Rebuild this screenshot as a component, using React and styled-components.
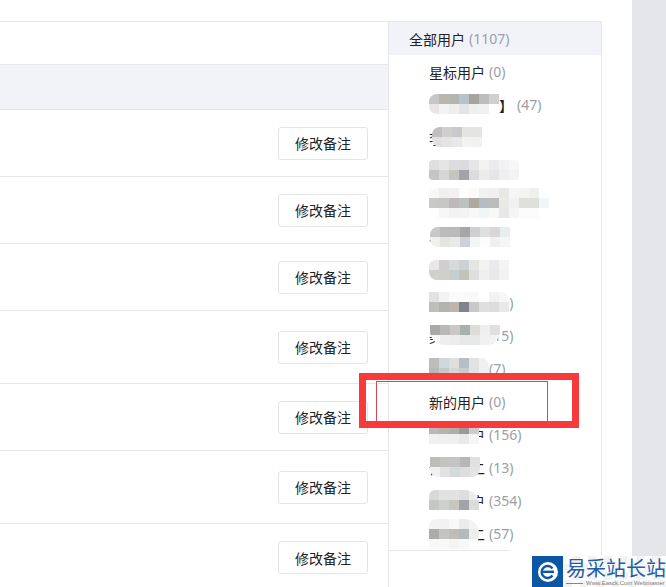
import React from "react";
import styled, { createGlobalStyle } from "styled-components";

const GlobalStyle = createGlobalStyle`
    html, body {
        margin: 0;
        padding: 0;
        background: #fff;
    }
    body {
        font-family: "Noto Sans CJK SC", "Liberation Sans", sans-serif;
        font-size: 14px;
        color: #222;
    }
`;

const Page = styled.div`
    display: flex;
    width: 666px;
    height: 587px;
    overflow: hidden;
    position: relative;
`;
const Content = styled.div`
    width: 632px;
    padding-top: 21px;
    box-sizing: border-box;
    flex-shrink: 0;
`;
const ScrollGutter = styled.div`
    flex-grow: 1;
    background: #e5e6ea;
`;
const Panel = styled.div`
    display: flex;
    width: 602px;
    height: 566px;
    border-top: 1px solid #e6e7ec;
    border-right: 1px solid #e6e7ec;
    box-sizing: border-box;
`;
const Table = styled.div`
    width: 388px;
    flex-shrink: 0;
`;
const TopBar = styled.div`
    height: 42px;
    border-bottom: 1px solid #e6e7ec;
`;
const HeadRow = styled.div`
    height: 44px;
    background: #f2f3f8;
    border-bottom: 1px solid #e6e7ec;
`;
const Row = styled.div`
    display: flex;
    justify-content: flex-end;
    align-items: center;
    height: ${(p) => p.$height}px;
    padding-right: 20px;
    border-bottom: 1px solid #e6e7ec;
    box-sizing: border-box;
    &:last-child {
        border-bottom: none;
    }
`;
const NoteButton = styled.button`
    width: 90px;
    height: 33px;
    padding: 0;
    background: #fff;
    border: 1px solid #e3e4e8;
    border-radius: 3px;
    font-family: inherit;
    font-size: 14px;
    line-height: 20px;
    color: #222;
`;
const Sidebar = styled.div`
    width: 213px;
    flex-shrink: 0;
    border-left: 1px solid #e6e7ec;
    box-sizing: border-box;
`;
const GroupRow = styled.div`
    display: flex;
    align-items: center;
    height: 33px;
    padding-left: ${(p) => (p.$all ? "20px" : "40px")};
    background: ${(p) => (p.$all ? "#f2f3f8" : "transparent")};
    white-space: nowrap;
`;
const GroupName = styled.span`
    position: relative;
`;
const GroupCount = styled.span`
    margin-left: 4px;
    margin-bottom: 1px;
    font-family: "Noto Sans", sans-serif;
    font-size: 14px;
    color: #9aa0a8;
`;
const ListEnd = styled.div`
    width: 121px;
    height: 1px;
    background: #e6e7ec;
`;
const MosaicSvg = styled.svg`
    position: absolute;
    z-index: 1;
    left: ${(p) => p.$left}px;
    top: ${(p) => p.$top}px;
    border-radius: ${(p) => p.$radius};
`;
const RedFrame = styled.div`
    position: absolute;
    left: 359px;
    top: 373px;
    width: 220px;
    height: 55px;
    box-sizing: border-box;
    border: 7px solid #f93a3a;
    z-index: 2;
`;
const InnerLine = styled.div`
    position: absolute;
    left: 10px;
    top: 1px;
    width: 172px;
    height: 40px;
    box-sizing: border-box;
    border: solid #d9484c;
    border-width: 1px 1px 0 1px;
`;
const WatermarkBox = styled.div`
    position: absolute;
    left: 532px;
    bottom: 0;
    display: flex;
    width: 134px;
    height: 31px;
    z-index: 3;
    background: repeating-conic-gradient(#f3f3f3 0 25%, #fff 0 50%) 0 0 / 16px 16px;
`;
const LogoBlock = styled.div`
    display: flex;
    align-items: center;
    justify-content: center;
    width: 31px;
    flex-shrink: 0;
    background: #0b57a4;
`;
const WatermarkText = styled.div`
    display: flex;
    flex-direction: column;
    padding-left: 3px;
`;
const WatermarkTitle = styled.div`
    font-family: "Noto Sans CJK SC", sans-serif;
    font-size: 20px;
    line-height: 23px;
    color: #1f5ea8;
    white-space: nowrap;
`;
const WatermarkSub = styled.div`
    display: flex;
    align-items: center;
    gap: 3px;
    font-family: "Liberation Sans", sans-serif;
    font-size: 6px;
    line-height: 8px;
    color: #777;
    white-space: nowrap;
    &::before {
        content: "";
        width: 17px;
        height: 1px;
        background: #888;
        flex-shrink: 0;
    }
`;

const Mosaic = ({ cells, left = 0, top = 0, radius = "4px" }) => {
    const cols = Math.max(...cells.map((r) => r.length));
    return (
        <MosaicSvg
            $left={left}
            $top={top}
            $radius={radius}
            width={cols * 10}
            height={cells.length * 10}
        >
            {cells.map((r, y) =>
                r.map((c, x) => (
                    <rect key={`${x}-${y}`} x={x * 10} y={y * 10} width="10" height="10" fill={`#${c}`} />
                ))
            )}
        </MosaicSvg>
    );
};

const rowHeights = [67, 67, 67, 73, 67, 73, 67];

const groups = [
    { name: "星标用户", count: "(0)" },
    {
        name: "【客户分组】", count: "(47)", left: 0, top: -1, radius: "8px 0 0 8px",
        cells: [
            ["c6c6c6", "b9b6ae", "b4b5b0", "b7c2ca", "a7a4a0", "bdbcbe", "cfcfcf"],
            ["e8e6e8", "f2f3f2", "efeeec", "e3e4e6", "eeefee", "f0f1f0", "ffffff"],
        ],
    },
    {
        name: "李某", count: "(0)", left: 3, top: -1, radius: "8px 0 0 8px",
        cells: [
            ["c0bebe", "cfcfcf", "c9c9cb", "e4e4e2", "e4e4e2"],
            ["e0e0e0", "e5e4e2", "e7e8ea", "f3f3f1", "f1f1f1"],
        ],
    },
    {
        name: "某某某某", count: "(12)", left: 0, top: -1, radius: "4px",
        cells: [
            ["dfdfdf", "e5e5e5", "dddde0", "dcdcde", "e6e6e6", "f3f3f3", "ebecee", "f2f2f4", "f7f7f7"],
            ["c8c4c6", "d6d6d4", "c8c4c0", "a0a4a8", "dcdcdc", "edecea", "e6e6e8", "efeff0", "f3f3f3"],
        ],
    },
    {
        name: "某某某某某", count: "(12)", left: 0, top: -6, radius: "8px",
        cells: [
            ["f7f7f7", "f1f0ee", "f1f1f1", "fdfdfd", "fcfbf9", "f0f1f1", "f0f0f0", "e8e8e4", "f6f6f6", "f4f4f2", "efefed"],
            ["c9c9c7", "c6c8c5", "bdb9ba", "bdc1c0", "aea8a0", "b5bdc1", "bcbdbb", "eaeae6", "f1f1f1", "dededa", "dededa", "f0f6fa"],
            ["fefefe", "f7f7f7", "f2f2f3", "f3f3f3", "f8f8f6", "f2f5f5", "f8f8f6", "e8e8e8", "f4f6f6", "fcfcfc", "fcfcfc"],
        ],
    },
    {
        name: "小某某某", count: "(5)", left: 1, top: 0, radius: "8px 0 0 8px",
        cells: [
            ["c8c8ca", "bcbaba", "bababa", "a6a6a8", "cfcfd1", "dee0e0", "d8d6d8", "e9edee"],
            ["f0f0f0", "e5e4e0", "e8eaea", "ced2d6", "f4f5f5", "fdfdfd", "f0f0f2", "f6f6f6"],
        ],
    },
    {
        name: "一某某某", count: "(8)", left: 0, top: 0, radius: "6px 0 0 8px",
        cells: [
            ["e8e8ea", "d0cece", "d8dada", "cdd0d4", "e5e5e3", "f3f3f1", "e9eaec", "f4f4f4"],
            ["d2d0ce", "d0cfcb", "c5cfcf", "c2c3bd", "dedede", "f0efed", "e8e9eb", "f2f2f2"],
        ],
    },
    {
        name: "某某某某", count: "(12)", left: 0, top: -1, radius: "0 8px 0 0",
        cells: [
            ["e2e2e2", "f2f3f3", "fbfbfb", "fafafa", "f9f9f9", "ffffff", "f2f2f2", "f7f7f7"],
            ["bebebc", "b5b3b0", "bcb5ae", "80848a", "c8c8c8", "dfdfdf", "dcdcde", "e9e9e9"],
        ],
    },
    {
        name: "美某某某", count: "(15)", left: 1, top: -1, radius: "0 0 14px 14px",
        cells: [
            ["a9a9a7", "bab9b7", "cac7c5", "a9b1b0", "dddcd8", "efefef", "e0e0e2"],
            ["f8f8f8", "eeeeee", "ececec", "e6e8e8", "e6e8e8", "f0f1f3", "f3f3f5"],
        ],
    },
    {
        name: "某某某某", count: "(7)", left: 0, top: -1, radius: "0 8px 0 0",
        cells: [
            ["bdbdbb", "d0d8dc", "e0dfdd", "b7bfc4", "e3e3e3", "f0f0f0"],
            ["b8b8b8", "c5c8c8", "d6d6d4", "c8ccd0", "e3e3e3", "f0f0f0"],
        ],
    },
    { name: "新的用户", count: "(0)" },
    {
        name: "某某某户", count: "(156)", left: 0, top: -1, radius: "0",
        cells: [
            ["b9b7b7", "b7b3ab", "adafac", "9a9a9e", "cccccc"],
            ["f0f0f0", "efefef", "eeefee", "e8e9eb", "f6f6f6"],
        ],
    },
    {
        name: "设某某二", count: "(13)", left: 1, top: -1, radius: "0 0 8px 8px",
        cells: [
            ["bcbcba", "c4c3bf", "c4c4c2", "b4b8ba", "e0e0e0"],
            ["f0f0f0", "e2e2e2", "d4d9db", "dededc", "e4e4e2"],
        ],
    },
    {
        name: "某某某户", count: "(354)", left: 0, top: -1, radius: "6px 14px 0 0",
        cells: [
            ["d9d9d9", "e2e2e2", "e2e2e2", "dedede", "ececec"],
            ["c5c7c5", "ced0ce", "c9c7bd", "a0a4a6", "dcdcdc"],
        ],
    },
    {
        name: "某某某二", count: "(57)", left: 0, top: -5, radius: "8px 14px 14px 0",
        cells: [
            ["f3f3f3", "f2f2f0", "f8f8f6", "eaebed", "f3f3f3"],
            ["acacaa", "c4c4c2", "bebdb7", "b4b9bb", "eeeeec"],
            ["f8f8f8", "f8f8f8", "f4f4f4", "f8f8f8", "fefefe"],
        ],
    },
];

const App = () => {
    return (
        <Page>
            <GlobalStyle />
            <Content>
                <Panel>
                    <Table>
                        <TopBar />
                        <HeadRow />
                        {rowHeights.map((h, i) => (
                            <Row key={i} $height={h}>
                                <NoteButton>修改备注</NoteButton>
                            </Row>
                        ))}
                    </Table>
                    <Sidebar>
                        <GroupRow $all>
                            <GroupName>全部用户</GroupName>
                            <GroupCount>(1107)</GroupCount>
                        </GroupRow>
                        {groups.map((g) => (
                            <GroupRow key={g.name + g.count}>
                                <GroupName>
                                    {g.name}
                                    {g.cells && (
                                        <Mosaic cells={g.cells} left={g.left} top={g.top} radius={g.radius} />
                                    )}
                                </GroupName>
                                <GroupCount>{g.count}</GroupCount>
                            </GroupRow>
                        ))}
                        <ListEnd />
                    </Sidebar>
                </Panel>
            </Content>
            <ScrollGutter />
            <RedFrame>
                <InnerLine />
            </RedFrame>
            <WatermarkBox>
                <LogoBlock>
                    <svg width="22" height="22" viewBox="0 0 22 22">
                        <circle cx="11" cy="11" r="10" fill="#fff" />
                        <path d="M15.5 7.5A6 6 0 1 0 15.5 14.5" fill="none" stroke="#0b57a4" strokeWidth="2.4" />
                        <path d="M6 10.8h11" stroke="#0b57a4" strokeWidth="2.4" />
                    </svg>
                </LogoBlock>
                <WatermarkText>
                    <WatermarkTitle>易采站长站</WatermarkTitle>
                    <WatermarkSub>Www.Easck.Com Webmaster</WatermarkSub>
                </WatermarkText>
            </WatermarkBox>
        </Page>
    );
};

export default App;
